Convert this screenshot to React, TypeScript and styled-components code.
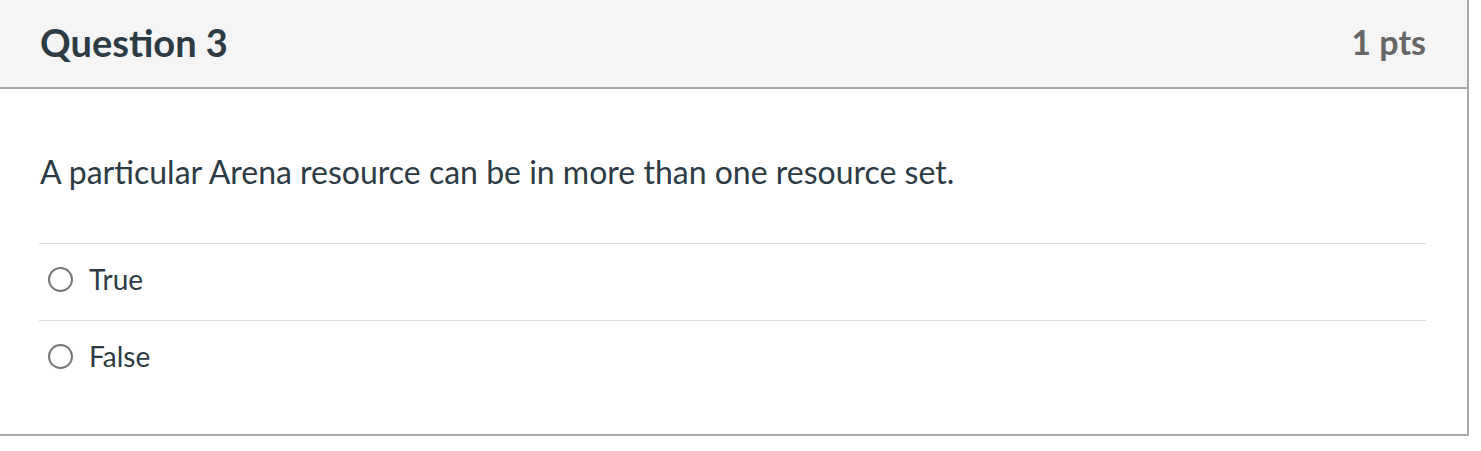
import React from 'react';
import styled, { createGlobalStyle } from 'styled-components';

const GlobalStyle = createGlobalStyle`
  body {
    margin: 0;
    background: #fff;
    font-family: Lato, "Open Sans", sans-serif;
    color: #2d3b45;
  }
`;

const Card = styled.div`
  width: 1469px;
  border-right: 2px solid #a9a9a9;
  border-bottom: 2px solid #a9a9a9;
  box-sizing: border-box;
`;

const Header = styled.div`
  height: 89px;
  box-sizing: border-box;
  background: #f5f5f5;
  border-bottom: 2px solid #a9a9a9;
  display: flex;
  align-items: center;
  justify-content: space-between;
  padding: 0 41px 4px 40px;
`;

const Title = styled.h2`
  margin: 0;
  font-size: 38px;
  font-weight: 700;
  color: #2d3b45;
`;

const Points = styled.div`
  font-size: 34px;
  font-weight: 700;
  color: #666;
`;

const Body = styled.div`
  padding: 0 41px 37px 39px;
`;

const Prompt = styled.p`
  margin: 0;
  padding: 63px 0 51px 1px;
  font-size: 32px;
  line-height: 40px;
  color: #2d3b45;
`;

const Answer = styled.label`
  display: flex;
  align-items: center;
  height: 77px;
  box-sizing: border-box;
  padding: 0 0 6px 9px;
  border-top: 1px solid #dcdcdc;
  font-size: 28px;
  color: #2d3b45;
`;

const Radio = styled.span`
  width: 21px;
  height: 21px;
  border: 2px solid #767676;
  border-radius: 50%;
  margin-right: 16px;
  flex-shrink: 0;
`;

const answers = ['True', 'False'];

export default function App() {
  return (
    <>
      <GlobalStyle />
      <Card>
        <Header>
          <Title>Question 3</Title>
          <Points>1 pts</Points>
        </Header>
        <Body>
          <Prompt>A particular Arena resource can be in more than one resource set.</Prompt>
          {answers.map((a) => (
            <Answer key={a}>
              <Radio />
              {a}
            </Answer>
          ))}
        </Body>
      </Card>
    </>
  );
}
